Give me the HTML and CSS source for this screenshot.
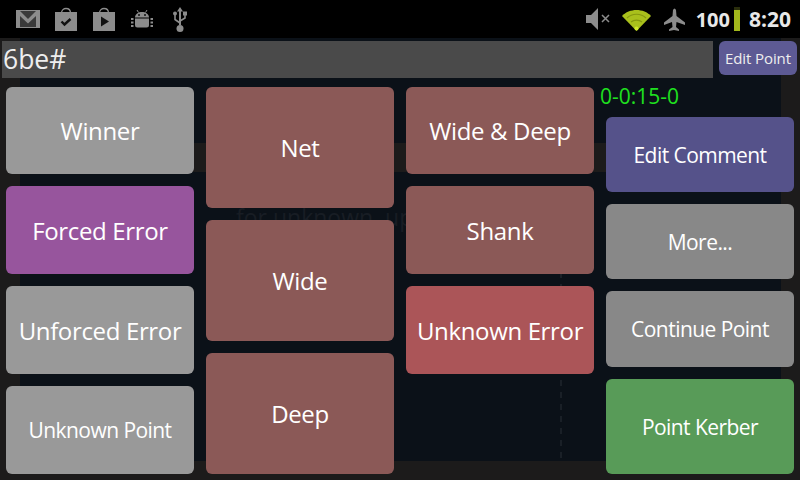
FILE: index.html
```html
<!DOCTYPE html>
<html>
<head>
    <title>Point Entry</title>
    <link rel="stylesheet" href="styles.css">
</head>
<body>
    <div class="statusbar">
        <div class="notify-icons">
            <span class="slot">
                <svg width="24" height="18" viewBox="0 0 24 18"><rect width="24" height="18" fill="#8c8c8c"/><rect x="1" y="1" width="22" height="16" fill="#3a3a3a"/><path d="M1 1h3l8 8 8-8h3v16h-3V6l-8 7.500L4 6v11H1z" fill="#8c8c8c"/></svg>
            </span>
            <span class="slot">
                <svg width="22" height="24" viewBox="0 0 22 24"><path d="M6.500 6C6.500 0 15.500 0 15.500 6" fill="none" stroke="#8c8c8c" stroke-width="1.300"/><rect y="5" width="22" height="19" fill="#8c8c8c"/><path d="M6.500 14.500l3 3 6-5.500" fill="none" stroke="#111" stroke-width="2.400"/></svg>
            </span>
            <span class="slot">
                <svg width="22" height="24" viewBox="0 0 22 24"><path d="M6.500 6C6.500 0 15.500 0 15.500 6" fill="none" stroke="#8c8c8c" stroke-width="1.300"/><rect y="5" width="22" height="19" fill="#8c8c8c"/><path d="M8 9.500l8 5-8 5z" fill="#111"/></svg>
            </span>
            <span class="slot">
                <svg width="22" height="20" viewBox="0 0 22 20"><path d="M7.500 3.500L6 1M14.500 3.500L16 1" stroke="#8c8c8c" stroke-width="1"/><path d="M4 8.500C4 1 18 1 18 8.500z" fill="#8c8c8c"/><path d="M4 9.500h14v6.500q0 2.500-2.500 2.500h-9Q4 18.500 4 16z" fill="#8c8c8c"/><circle cx="8" cy="6" r="1" fill="#111"/><circle cx="14" cy="6" r="1" fill="#111"/><path d="M0 9h2.500v2H0zM0 12.500h2.500v2H0zM0 16h2.500v2H0zM19.500 9H22v2h-2.500zM19.500 12.500H22v2h-2.500zM19.500 16H22v2h-2.500z" fill="#8c8c8c"/></svg>
            </span>
            <span class="slot">
                <svg width="16" height="25" viewBox="0 0 16 25"><path d="M8 0l3 4.500H9V18H7V4.500H5z" fill="#8c8c8c"/><path d="M8 16l-5-3.500V8M8 14l5-3V7" fill="none" stroke="#8c8c8c" stroke-width="1.600"/><circle cx="3" cy="6.500" r="2" fill="#8c8c8c"/><rect x="11" y="4.500" width="4" height="4" fill="#8c8c8c"/><circle cx="8" cy="21.500" r="3.500" fill="#8c8c8c"/></svg>
            </span>
        </div>
        <div class="sys-icons">
            <svg class="ic-mute" width="24" height="22" viewBox="0 0 24 22"><path d="M0 7h5l7-7v22l-7-7H0z" fill="#8c8c8c"/><path d="M16 7l7 7M23 7l-7 7" stroke="#8c8c8c" stroke-width="1.500"/></svg>
            <svg class="ic-wifi" width="29" height="23" viewBox="0 0 29 23"><path d="M0 8C7 0 22 0 29 8L14.500 23z" fill="#a9c01c"/><path d="M5 10C10 5 19 5 24 10M9 14C12 11.500 17 11.500 20 14" fill="none" stroke="#86990f" stroke-width="1.200"/><circle cx="14.500" cy="20.500" r="2" fill="#d0e82a"/></svg>
            <svg class="ic-plane" width="21" height="23" viewBox="0 0 21 23"><path d="M9 2Q10.500-1 12 2L12.500 8 21 14.500V17l-8.500-3-.5 5 3 2.500V23l-5-1-5 1v-1.500L8.500 19 8 14l-8 3v-2.500L8.500 8z" fill="#8c8c8c"/></svg>
            <span class="batt-text">100</span>
            <span class="batt"><span class="batt-fill"></span></span>
            <span class="clock">8:20</span>
        </div>
    </div>

    <div class="screen">
        <div class="ghost-text">for unknown, up for</div>
        <div class="top-row">
            <div class="comment-box">6be#</div>
            <button class="edit-point">Edit Point</button>
        </div>

        <div class="board">
            <div class="col quad">
                <button class="btn grey">Winner</button>
                <button class="btn purple">Forced Error</button>
                <button class="btn grey">Unforced Error</button>
                <button class="btn grey small">Unknown Point</button>
            </div>
            <div class="col">
                <button class="btn rose">Net</button>
                <button class="btn rose">Wide</button>
                <button class="btn rose">Deep</button>
            </div>
            <div class="col quad">
                <button class="btn rose">Wide &amp; Deep</button>
                <button class="btn rose">Shank</button>
                <button class="btn red">Unknown Error</button>
            </div>
            <div class="col side">
                <div class="score">0-0:15-0</div>
                <button class="btn indigo small">Edit Comment</button>
                <button class="btn dim small">More...</button>
                <button class="btn dim small wide-row">Continue Point</button>
                <button class="btn green small tall">Point Kerber</button>
            </div>
        </div>
    </div>
</body>
</html>
```

FILE: styles.css
```css
html, body { margin: 0; padding: 0; }
body { width: 800px; height: 480px; overflow: hidden; background: #1c1b1b; font-family: "Open Sans", "Noto Sans", sans-serif; color: #fff; }

/* status bar */
.statusbar { height: 38px; background: #000; display: flex; justify-content: space-between; align-items: center; }
.notify-icons { display: flex; padding-left: 9px; }
.slot { width: 38px; height: 38px; display: flex; align-items: center; justify-content: center; }
.sys-icons { display: flex; align-items: center; padding-right: 9px; font-family: "Open Sans", sans-serif; font-weight: 700; font-size: 20px; color: #e8e8e8; }
.clock { font-size: 21px; }
.ic-mute { margin-right: 12px; }
.ic-wifi { margin-right: 13px; }
.ic-plane { margin-right: 11px; }
.batt { width: 6px; height: 24px; margin: 0 9px 0 4px; background: #2a2e0c; display: flex; align-items: flex-end; }
.batt-fill { width: 6px; height: 21px; background: #a2b81c; }

/* everything under the status bar, the faint shapes are the screen behind this dialog */
.screen {
    position: relative;
    z-index: 0;
    height: 442px;
    background:
        repeating-linear-gradient(#1a2027 0 6px, transparent 6px 12px) 560px 234px / 2px 188px no-repeat,
        linear-gradient(#1c1b1b, #1c1b1b) 20px 105px / 586px 29px no-repeat,
        linear-gradient(#0b1118, #0b1118) 20px 0 / 761px 423px no-repeat,
        #1c1b1b;
}
.ghost-text { position: absolute; z-index: -1; left: 236px; top: 164px; font-size: 23px; line-height: 30px; color: #181d24; white-space: nowrap; }
.top-row { display: flex; align-items: flex-start; padding: 3px 3px 0 2px; height: 46px; box-sizing: border-box; }
.comment-box { width: 711px; height: 37px; background: #4a4a4a; font-size: 26.5px; line-height: 37px; padding-left: 1px; box-sizing: border-box; color: #eee; }
.edit-point { margin-left: 6px; width: 78px; height: 34px; padding: 0; background: #5d5a94; color: #eee; font-family: inherit; font-size: 15px; letter-spacing: -0.1px; border: none; border-radius: 6px; }

/* button grid */
.board { display: flex; gap: 12px; padding: 3px 6px 0; height: 387px; }
.col { width: 188px; display: grid; grid-template-rows: repeat(3, 121px); gap: 12px; }
.quad { grid-template-rows: 87px repeat(3, 88px); }
.btn { padding: 0; border: none; border-radius: 6px; color: #fff; font-family: inherit; font-size: 24px; letter-spacing: -0.35px; }
.btn.small { font-size: 21px; letter-spacing: -0.55px; }
.grey { background: #999; }
.dim { background: #888; }
.purple { background: #97559d; }
.rose { background: #8b5957; }
.red { background: #ab5558; }
.indigo { background: #55528a; }
.green { background: #589b58; }

/* right hand column */
.side { display: flex; flex-direction: column; }
.score { height: 18px; color: #1fe01f; font-size: 21px; line-height: 18px; margin-left: -6px; white-space: nowrap; }
.side > .btn { height: 75px; }
.side > .btn.wide-row { height: 76px; }
.side > .btn.tall { height: 95px; }
```
